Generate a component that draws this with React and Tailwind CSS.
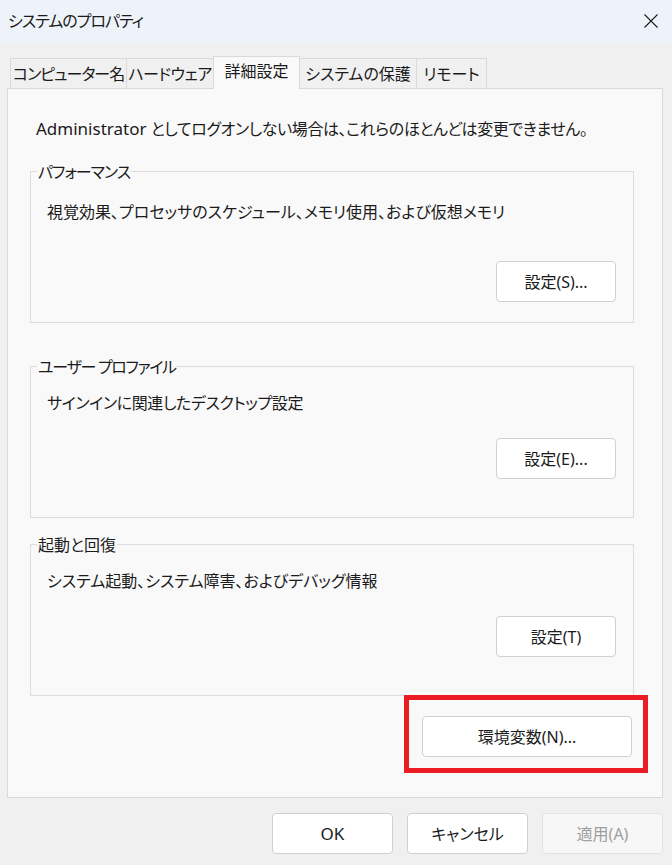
import React from 'react';

function Btn({ children, className = '' }) {
  return (
    <div
      className={`h-[41px] bg-white border border-[#d0d0d0] rounded-[4px] flex items-center justify-center leading-[24px] text-[#1b1b1b] whitespace-nowrap ${className}`}
    >
      {children}
    </div>
  );
}

function Group({ label, labelCls = '', desc, descCls = '', btn, mt, pt, btnMt }) {
  return (
    <div className={`relative h-[152px] border border-[#dcdcdc] ${mt}`}>
      <span className={`absolute -top-[12px] left-[6px] bg-[#f9f9f9] px-[1px] leading-[24px] whitespace-nowrap ${labelCls}`}>
        {label}
      </span>
      <div className={`${pt} pl-[16px] leading-[24px] whitespace-nowrap ${descCls}`}>{desc}</div>
      <div className={`${btnMt} flex justify-end pr-[17px]`}>
        <Btn className="w-[120px]">{btn}</Btn>
      </div>
    </div>
  );
}

export default function App() {
  return (
    <div className="w-[672px] h-[865px] bg-[#f0f0f0] flex flex-col text-[16px] leading-[24px] text-[#1b1b1b] [font-family:'Noto_Sans','Noto_Sans_CJK_JP',sans-serif] [font-feature-settings:'palt'] overflow-hidden">
      {/* title bar */}
      <div className="h-[43px] bg-[#eef3f9] flex items-center justify-between pb-[2px]">
        <span className="pl-[8px] whitespace-nowrap tracking-[-1px]">システムのプロパティ</span>
        <div className="w-[42px] h-[24px] flex items-center justify-center">
          <svg width="14" height="14" viewBox="0 0 14 14">
            <path d="M0.5 0.5 L13.5 13.5 M13.5 0.5 L0.5 13.5" stroke="#1b1b1b" strokeWidth="1.1" fill="none" />
          </svg>
        </div>
      </div>

      {/* tabs */}
      <div className="mt-[13px] pl-[10px] flex items-end h-[32px] whitespace-nowrap">
        <div className="w-[116px] h-[30px] border-t border-l border-[#dadada] flex justify-center pt-[3px] tracking-[-1px]">
          コンピューター名
        </div>
        <div className="w-[87px] h-[30px] border-t border-l border-[#dadada] flex justify-center pt-[3px] tracking-[-0.5px]">
          ハードウェア
        </div>
        <div className="relative z-10 w-[87px] h-[33px] -mb-px border-t border-l border-r border-[#dadada] bg-[#f9f9f9] flex justify-center pt-[2px]">
          詳細設定
        </div>
        <div className="w-[117px] h-[30px] border-t border-r border-[#dadada] flex justify-center pt-[3px]">
          システムの保護
        </div>
        <div className="w-[70px] h-[30px] border-t border-r border-[#dadada] flex justify-center pt-[3px]">
          リモート
        </div>
      </div>

      {/* panel */}
      <div className="mx-[7px] w-[656px] h-[710px] border border-[#d9d9d9] bg-[#f9f9f9] flex flex-col">
        <p className="mt-[28px] pl-[28px] whitespace-nowrap">
          <span className="text-[17px]">Administrator</span>{' '}
          <span className="tracking-[-0.4px]">としてログオンしない場合は、これらのほとんどは変更できません。</span>
        </p>
        <div className="ml-[22px] w-[604px] flex flex-col">
          <Group
            label="パフォーマンス"
            labelCls="tracking-[-1px]"
            desc="視覚効果、プロセッサのスケジュール、メモリ使用、および仮想メモリ"
            btn="設定(S)..."
            mt="mt-[30px]"
            pt="pt-[28px]"
            btnMt="mt-[37px]"
          />
          <Group
            label="ユーザー プロファイル"
            labelCls="tracking-[-1.3px]"
            desc="サインインに関連したデスクトップ設定"
            descCls="tracking-[-0.4px]"
            btn="設定(E)..."
            mt="mt-[43px]"
            pt="pt-[24px]"
            btnMt="mt-[23px]"
          />
          <Group
            label="起動と回復"
            desc="システム起動、システム障害、およびデバッグ情報"
            btn="設定(T)"
            mt="mt-[26px]"
            pt="pt-[24px]"
            btnMt="mt-[23px]"
          />
          <div className="mt-[20px] flex justify-end pr-[2px]">
            <div className="relative">
              <Btn className="w-[210px] border-[#0067c0]">環境変数(N)...</Btn>
              <div className="absolute -left-[18px] -top-[21px] -right-[16px] -bottom-[16px] border-[5px] border-[#ec1c24]"></div>
            </div>
          </div>
        </div>
      </div>

      {/* bottom buttons */}
      <div className="mt-[15px] flex justify-end gap-[14px] pr-[9px]">
        <Btn className="w-[121px] text-[17px]">OK</Btn>
        <Btn className="w-[121px]">キャンセル</Btn>
        <div className="w-[121px] h-[41px] bg-[#f7f7f7] border border-[#e3e3e3] rounded-[4px] flex items-center justify-center text-[#9e9e9e] whitespace-nowrap">
          適用(A)
        </div>
      </div>
    </div>
  );
}
